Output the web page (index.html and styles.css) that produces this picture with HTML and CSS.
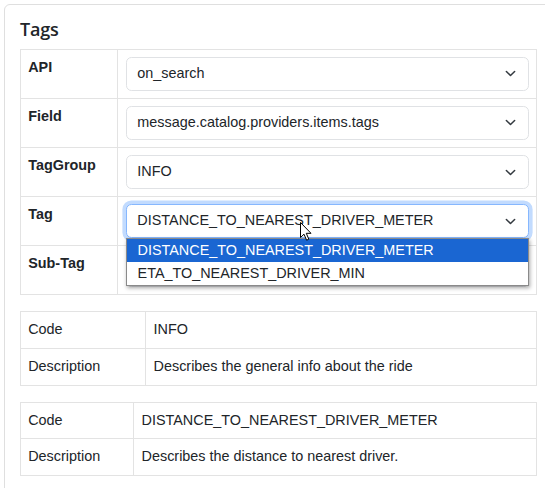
FILE: index.html
```html
<!DOCTYPE html>
<html lang="en">
<head>
<meta charset="utf-8">
<title>Tags</title>
<link rel="stylesheet" href="styles.css">
</head>
<body>
<div class="card">
  <h5 class="card-title">Tags</h5>
  <table class="tbl tbl-form">
    <tr>
      <th class="lbl">API</th>
      <td><div class="select"><span>on_search</span><svg class="chev" viewBox="0 0 16 16"><path d="m2 5 6 6 6-6"/></svg></div></td>
    </tr>
    <tr>
      <th class="lbl">Field</th>
      <td><div class="select"><span>message.catalog.providers.items.tags</span><svg class="chev" viewBox="0 0 16 16"><path d="m2 5 6 6 6-6"/></svg></div></td>
    </tr>
    <tr>
      <th class="lbl">TagGroup</th>
      <td><div class="select"><span>INFO</span><svg class="chev" viewBox="0 0 16 16"><path d="m2 5 6 6 6-6"/></svg></div></td>
    </tr>
    <tr>
      <th class="lbl">Tag</th>
      <td>
        <div class="select focused"><span>DISTANCE_TO_NEAREST_DRIVER_METER</span><svg class="chev" viewBox="0 0 16 16"><path d="m2 5 6 6 6-6"/></svg>
          <ul class="dropdown">
            <li class="opt active">DISTANCE_TO_NEAREST_DRIVER_METER</li>
            <li class="opt">ETA_TO_NEAREST_DRIVER_MIN</li>
          </ul>
        </div>
      </td>
    </tr>
    <tr>
      <th class="lbl">Sub-Tag</th>
      <td><div class="select"><span></span><svg class="chev" viewBox="0 0 16 16"><path d="m2 5 6 6 6-6"/></svg></div></td>
    </tr>
  </table>

  <table class="tbl tbl-info info-a">
    <tr><td class="key">Code</td><td>INFO</td></tr>
    <tr><td class="key">Description</td><td>Describes the general info about the ride</td></tr>
  </table>

  <table class="tbl tbl-info info-b">
    <tr><td class="key">Code</td><td>DISTANCE_TO_NEAREST_DRIVER_METER</td></tr>
    <tr><td class="key">Description</td><td>Describes the distance to nearest driver.</td></tr>
  </table>
</div>
<svg class="cursor" viewBox="0 0 12 19" width="12" height="19"><path d="M0.5 0.5 L0.5 15.5 L4 12.2 L6.6 18.2 L8.8 17.2 L6.3 11.3 L11 11.3 Z"/></svg>
</body>
</html>
```
FILE: styles.css
```css
html, body {
  margin: 0;
  padding: 0;
  background: #ffffff;
}

body {
  font-family: "Liberation Sans", Arial, sans-serif;
  font-size: 14.4px;
  line-height: 1.5;
  color: #212529;
  overflow: hidden;
  position: relative;
  width: 545px;
  height: 488px;
}

.card {
  margin: 4px 0 0 4px;
  width: 517px;
  padding: 14px 15px 40px 15px;
  border: 1px solid #dfdfdf;
  border-radius: 6px;
  background: #fff;
}

.card-title {
  margin: 0 0 8px 0;
  font-family: "Open Sans", "Noto Sans", sans-serif;
  font-weight: 600;
  font-size: 18px;
  line-height: 1.2;
  color: #212529;
  letter-spacing: -0.2px;
}

.tbl {
  width: 100%;
  border-collapse: collapse;
  margin: 0 0 16px 0;
}

.tbl th,
.tbl td {
  border: 1px solid #e3e3e3;
  padding: 7.2px 7.2px;
  vertical-align: top;
  text-align: left;
}

.tbl-form .lbl {
  width: 82px;
  font-weight: 700;
}

.tbl-info td {
  padding: 7px 7.2px;
  vertical-align: middle;
}

.info-a .key {
  width: 110px;
}

.info-b .key {
  width: 98px;
}

.select {
  position: relative;
  box-sizing: border-box;
  height: 33.8px;
  display: flex;
  align-items: center;
  justify-content: space-between;
  padding: 0 11.5px 0 10.8px;
  border: 1px solid #e0e2e5;
  border-radius: 5.4px;
  background: #fff;
}

.select.focused {
  border-color: #86b7fe;
  box-shadow: 0 0 0 3.6px rgba(13, 110, 253, 0.25);
}

.chev {
  width: 11px;
  height: 11px;
  flex: none;
}

.chev path {
  fill: none;
  stroke: #343a40;
  stroke-width: 2.2;
  stroke-linecap: round;
  stroke-linejoin: round;
}

.dropdown {
  position: absolute;
  left: -1px;
  right: -1px;
  top: 32.5px;
  margin: 0;
  padding: 0;
  list-style: none;
  background: #fff;
  border: 1px solid #8a8a8a;
  box-shadow: 1px 2px 4px rgba(0, 0, 0, 0.35);
  z-index: 5;
}

.opt {
  height: 23px;
  line-height: 23px;
  padding-left: 11px;
  color: #212529;
}

.opt.active {
  background: #1a66d2;
  color: #ffffff;
}

.cursor {
  position: absolute;
  left: 300px;
  top: 222px;
  z-index: 10;
}

.cursor path {
  fill: #ffffff;
  stroke: #000000;
  stroke-width: 1;
  stroke-linejoin: round;
}
```
